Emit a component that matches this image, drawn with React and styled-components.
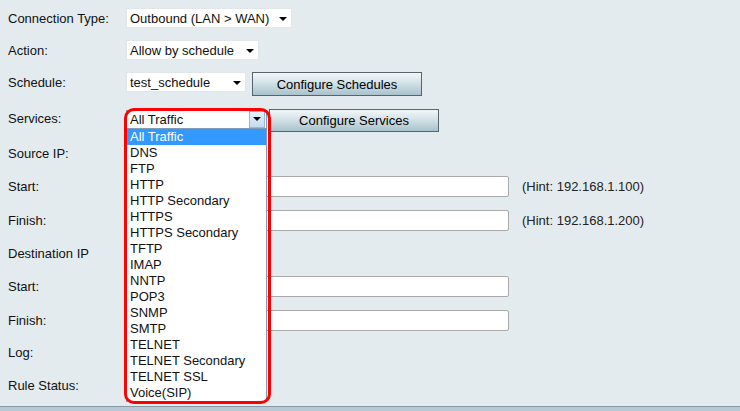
import React from "react";
import styled, { createGlobalStyle } from "styled-components";

const Global = createGlobalStyle`
  html, body { margin: 0; padding: 0; background: #b8c9d6; }
  body { font-family: "Liberation Sans", Arial, sans-serif; font-size: 13px; color: #111; }
`;

const Page = styled.div`
  width: 740px;
  height: 407px;
  box-sizing: border-box;
  background: #e4ebef;
  border-bottom: 1px solid #8797a3;
  padding: 3px 0 0 8px;
  overflow: hidden;
`;

const Footer = styled.div`
  height: 4px;
  background: #b8c9d6;
`;

const Row = styled.div`
  display: grid;
  grid-template-columns: 118px 1fr;
  align-items: center;
  height: ${(p) => p.$h}px;
`;

const Label = styled.div`
  white-space: nowrap;
`;

const Controls = styled.div`
  display: flex;
  align-items: flex-start;
  height: ${(p) => (p.$h ? p.$h : 20)}px;
  gap: 6px;
`;

const Select = styled.div`
  position: relative;
  box-sizing: border-box;
  width: ${(p) => p.$w}px;
  height: 20px;
  background: #fff;
  border: 1px solid #e2e6e8;
  display: flex;
  align-items: center;
  padding-left: 3px;
  white-space: nowrap;
`;

const Arrow = styled.span`
  position: absolute;
  right: 4px;
  top: 8px;
  width: 0;
  height: 0;
  border-left: 4px solid transparent;
  border-right: 4px solid transparent;
  border-top: 4px solid #000;
`;

const OpenSelect = styled.div`
  position: relative;
  box-sizing: border-box;
  width: 141px;
  height: 19px;
  margin-top: 1px;
  background: #fff;
  border: 1px solid #7f9db9;
  display: flex;
  align-items: center;
  padding-left: 3px;
`;

const ArrowBox = styled.span`
  position: absolute;
  right: 1px;
  top: 0;
  width: 16px;
  height: 17px;
  box-sizing: border-box;
  border: 1px solid #98b8d4;
  background: linear-gradient(#e6f0f9, #c4dbef);
  display: flex;
  align-items: center;
  justify-content: center;
  &::after {
    content: "";
    border-left: 4px solid transparent;
    border-right: 4px solid transparent;
    border-top: 4px solid #000;
  }
`;

const List = styled.div`
  position: absolute;
  left: -1px;
  top: 18px;
  width: 141px;
  box-sizing: border-box;
  background: #fff;
  border: 1px solid #7f9db9;
  border-top: none;
  z-index: 2;
`;

const Item = styled.div`
  height: 16px;
  line-height: 16px;
  padding-left: 3px;
  white-space: nowrap;
  background: ${(p) => (p.$selected ? "#3399ff" : "transparent")};
  color: ${(p) => (p.$selected ? "#fff" : "#111")};
`;

const Highlight = styled.div`
  position: absolute;
  left: -3px;
  top: -3px;
  width: 147px;
  height: 296px;
  box-sizing: border-box;
  border: 3px solid #ff0000;
  border-radius: 10px;
  z-index: 3;
  pointer-events: none;
`;

const Button = styled.div`
  box-sizing: border-box;
  width: ${(p) => p.$w}px;
  height: ${(p) => p.$hh}px;
  margin-top: ${(p) => p.$mt || 0}px;
  border: 1px solid #56646b;
  background: linear-gradient(#f3f7f8 0%, #d3e2e8 45%, #a9c2cc 100%);
  display: flex;
  align-items: center;
  justify-content: center;
  white-space: nowrap;
  color: #000;
`;

const Input = styled.div`
  box-sizing: border-box;
  width: 383px;
  height: 21px;
  background: #fff;
  border: 1px solid #a9a9a9;
  border-radius: 2px;
`;

const Hint = styled.span`
  margin-left: 13px;
  color: #222;
  white-space: nowrap;
`;

const InputLine = styled.div`
  display: flex;
  align-items: center;
`;

const services = [
  "All Traffic",
  "DNS",
  "FTP",
  "HTTP",
  "HTTP Secondary",
  "HTTPS",
  "HTTPS Secondary",
  "TFTP",
  "IMAP",
  "NNTP",
  "POP3",
  "SNMP",
  "SMTP",
  "TELNET",
  "TELNET Secondary",
  "TELNET SSL",
  "Voice(SIP)",
];

export default function App() {
  return (
    <>
      <Global />
      <Page>
        <Row $h={30}>
          <Label>Connection Type:</Label>
          <Controls>
            <Select $w={166}>
              Outbound (LAN &gt; WAN)
              <Arrow />
            </Select>
          </Controls>
        </Row>
        <Row $h={34}>
          <Label>Action:</Label>
          <Controls>
            <Select $w={133}>
              Allow by schedule
              <Arrow />
            </Select>
          </Controls>
        </Row>
        <Row $h={30}>
          <Label>Schedule:</Label>
          <Controls>
            <Select $w={120}>
              test_schedule
              <Arrow />
            </Select>
            <Button $w={170} $hh={24}>Configure Schedules</Button>
          </Controls>
        </Row>
        <Row $h={43}>
          <Label>Services:</Label>
          <Controls>
            <OpenSelect>
              All Traffic
              <ArrowBox />
              <List>
                {services.map((s, i) => (
                  <Item key={s} $selected={i === 0}>
                    {s}
                  </Item>
                ))}
              </List>
              <Highlight />
            </OpenSelect>
            <Button $w={170} $hh={23} style={{ marginLeft: -4 }}>
              Configure Services
            </Button>
          </Controls>
        </Row>
        <Row $h={26}>
          <Label>Source IP:</Label>
          <div />
        </Row>
        <Row $h={41}>
          <Label>Start:</Label>
          <InputLine>
            <Input />
            <Hint>(Hint: 192.168.1.100)</Hint>
          </InputLine>
        </Row>
        <Row $h={27}>
          <Label>Finish:</Label>
          <InputLine>
            <Input />
            <Hint>(Hint: 192.168.1.200)</Hint>
          </InputLine>
        </Row>
        <Row $h={38}>
          <Label>Destination IP</Label>
          <div />
        </Row>
        <Row $h={29}>
          <Label>Start:</Label>
          <InputLine>
            <Input />
          </InputLine>
        </Row>
        <Row $h={39}>
          <Label>Finish:</Label>
          <InputLine>
            <Input />
          </InputLine>
        </Row>
        <Row $h={24}>
          <Label>Log:</Label>
          <div />
        </Row>
        <Row $h={43}>
          <Label>Rule Status:</Label>
          <div />
        </Row>
      </Page>
      <Footer />
    </>
  );
}
